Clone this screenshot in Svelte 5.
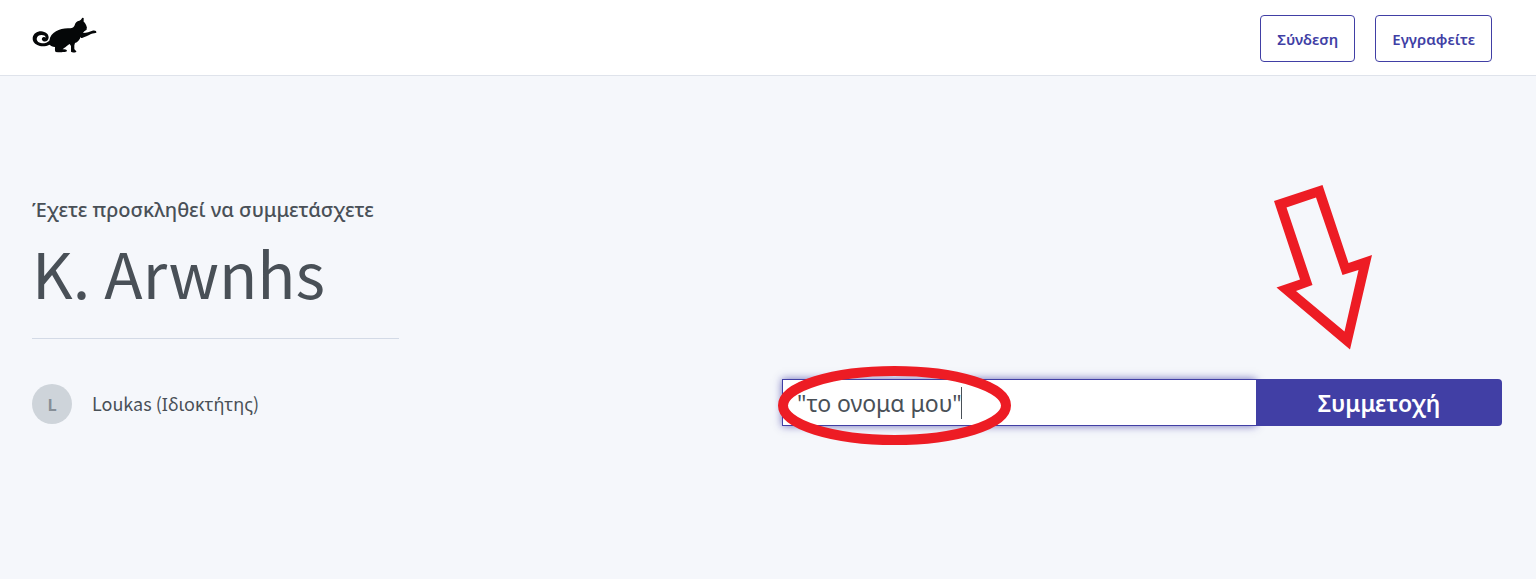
<script>
  const savedName = '"το ονομα μου"';
  let name = $state(savedName);
  let untouched = $derived(name === savedName);
</script>

<div class="page">
  <header>
    <a class="logo" href="#home" aria-label="Home">
      <svg viewBox="36 36 195 108" width="65" height="36" aria-hidden="true">
        <path d="M52 120C42 115 37 107 38 98C40 86 51 79 63 79C77 80 86 88 86 97C86 107 77 112 70 109C64 106 64 99 69 97C72 95 75 96 77 98C77 92 71 90 65 90C56 90 50 95 50 102C50 109 57 114 66 115C76 115 83 112 88 107C90 94 97 85 108 79C120 71 135 69 151 70C157 70 162 67 164 61C166 53 170 48 178 47C182 46 184 42 187 38L191 39L191 50C196 54 199 60 200 65C202 68 199 71 200 73C200 76 196 77 193 79L189 84C201 84 209 80 217 77C224 75 230 77 229 83C226 85 220 84 213 87C203 92 195 96 188 98C185 100 182 99 182 95C179 104 173 112 165 114L163 121L163 132C164 136 170 137 169 140C168 143 156 143 153 140L153 123L149 117C146 119 141 122 137 126C132 129 128 132 128 133C134 133 141 134 141 138C140 142 120 142 107 141C104 137 105 131 105 126C97 125 93 122 88 119C78 125 62 126 52 120Z" />
      </svg>
    </a>
    <nav>
      <button type="button" class="outline">Σύνδεση</button>
      <button type="button" class="outline">Εγγραφείτε</button>
    </nav>
  </header>

  <main>
    <section class="room">
      <p class="invite">Έχετε προσκληθεί να συμμετάσχετε</p>
      <h1>K. Arwnhs</h1>
      <hr />
    </section>
    <div class="join-row">
      <div class="owner">
        <span class="avatar" aria-hidden="true">L</span>
        <span class="owner-name">Loukas (<span class="role">Ιδιοκτήτης</span>)</span>
      </div>
      <form onsubmit={(e) => e.preventDefault()}>
        <!-- svelte-ignore a11y_autofocus -->
        <input
          type="text"
          aria-label="Όνομα"
          class:steady={untouched}
          bind:value={name}
          autofocus
          autocomplete="off"
          spellcheck="false"
        />
        <button type="submit">Συμμετοχή</button>
        {#if untouched}
          <span class="caret" aria-hidden="true"></span>
        {/if}
        <svg class="ring" viewBox="0 0 233 79" width="233" height="79" aria-hidden="true">
          <ellipse cx="116.5" cy="39.5" rx="111.5" ry="34.5" />
        </svg>
        <svg class="arrow" viewBox="1274 185 98 165" width="98" height="165" aria-hidden="true">
          <path fill-rule="evenodd" d="M1274 201L1322.500 185L1348.500 263L1372 255L1350 349.500L1276.500 287.500L1300 279.500ZM1286.500 207.500L1312.500 285L1296 291L1344.500 331.500L1358.500 270L1342.500 275L1316 197.500Z" />
        </svg>
      </form>
    </div>
  </main>
</div>

<style>
  :global(body) {
    margin: 0;
    background: #fff;
  }

  .page {
    color: #495057;
    font-family: "Noto Sans", "Open Sans", sans-serif;
    font-size: 18px;
  }

  header {
    display: flex;
    align-items: center;
    justify-content: space-between;
    padding: 15px 44px 13px 32px;
    background: #fff;
    border-bottom: 1px solid #dfe3eb;
  }

  .logo {
    display: flex;
    margin-top: -8px;
  }

  .logo path {
    fill: #050708;
  }

  nav {
    display: flex;
    gap: 20px;
  }

  button {
    font-family: inherit;
    font-weight: 600;
    cursor: pointer;
  }

  .outline {
    height: 47px;
    padding: 0 16px;
    border: 1px solid #413fa5;
    border-radius: 4px;
    background: #fff;
    color: #413fa5;
    font-size: 15px;
  }

  main {
    padding: 120px 34px 153px 32px;
    background: #f5f7fb;
  }

  .room {
    max-width: 367px;
  }

  .invite {
    margin: 0;
    font-size: 20px;
    font-weight: 500;
    line-height: 28px;
    white-space: nowrap;
  }

  h1 {
    margin: 11px 0 29px;
    font-family: "Noto Sans CJK JP", "Noto Sans", sans-serif;
    font-size: 63px;
    font-weight: 400;
    line-height: 74px;
  }

  hr {
    margin: 0;
    border: 0;
    border-top: 1px solid #d3dae6;
  }

  .join-row {
    display: grid;
    grid-template-columns: 1fr 720px;
    align-items: center;
    margin-top: 40px;
  }

  .owner {
    display: flex;
    align-items: center;
    gap: 20px;
    padding-top: 2px;
  }

  .avatar {
    width: 40px;
    border-radius: 50%;
    background: #ced4da;
    color: #868e96;
    font-family: "Noto Sans CJK JP", "Noto Sans", sans-serif;
    font-size: 16px;
    font-weight: 700;
    line-height: 40px;
    text-align: center;
  }

  .owner-name {
    font-family: "Noto Sans CJK JP", "Noto Sans", sans-serif;
    line-height: 24px;
  }

  .role {
    font-family: "Noto Sans", sans-serif;
  }

  form {
    position: relative;
    display: flex;
  }

  input {
    flex: 1;
    min-width: 0;
    box-sizing: border-box;
    height: 47px;
    padding: 0 14px;
    border: 1px solid #413fa5;
    border-right: 0;
    border-radius: 0;
    outline: 0;
    background: #fff;
    box-shadow: 0 0 8px #413fa5c0;
    color: #495057;
    font-family: inherit;
    font-size: 23px;
  }

  .steady {
    caret-color: transparent;
  }

  form button {
    position: relative;
    width: 246px;
    padding: 0;
    border: 0;
    border-radius: 0 4px 4px 0;
    background: #413fa5;
    color: #fff;
    font-size: 23px;
  }

  form svg {
    position: absolute;
    pointer-events: none;
  }

  .caret {
    position: absolute;
    left: 179px;
    top: 8px;
    width: 1px;
    height: 32px;
    background: #495057;
  }

  .ring {
    left: -4px;
    top: -13px;
  }

  .ring ellipse {
    fill: none;
    stroke: #ed1c24;
    stroke-width: 10;
  }

  .arrow {
    right: 130px;
    bottom: 76px;
  }

  .arrow path {
    fill: #ed1c24;
  }
</style>
